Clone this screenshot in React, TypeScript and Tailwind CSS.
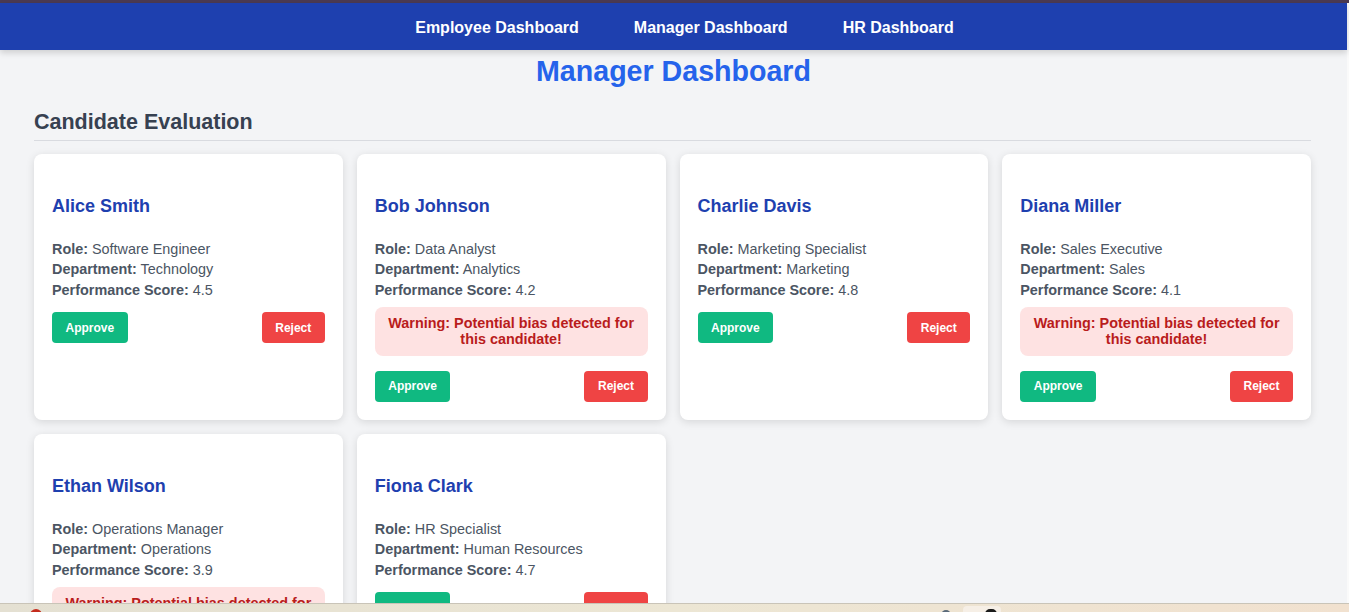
const candidates = [
  { name: 'Alice Smith', role: 'Software Engineer', department: 'Technology', score: '4.5', bias: false },
  { name: 'Bob Johnson', role: 'Data Analyst', department: 'Analytics', score: '4.2', bias: true },
  { name: 'Charlie Davis', role: 'Marketing Specialist', department: 'Marketing', score: '4.8', bias: false },
  { name: 'Diana Miller', role: 'Sales Executive', department: 'Sales', score: '4.1', bias: true },
  { name: 'Ethan Wilson', role: 'Operations Manager', department: 'Operations', score: '3.9', bias: true },
  { name: 'Fiona Clark', role: 'HR Specialist', department: 'Human Resources', score: '4.7', bias: false },
];

type Candidate = (typeof candidates)[number];

function CandidateCard({ c }: { c: Candidate }) {
  return (
    <div className="flex flex-col rounded-lg bg-white px-[18px] pt-[38px] pb-[18px] shadow-[0_2px_8px_rgba(0,0,0,0.12)]">
      <h3 className="text-[18px] leading-[28px] font-bold text-[#1e40af]">{c.name}</h3>
      <div className="mt-[18.7px] text-[14.4px] leading-[20.6px] text-[#4b5563]">
        <p>
          <strong>Role:</strong> {c.role}
        </p>
        <p>
          <strong>Department:</strong> {c.department}
        </p>
        <p>
          <strong>Performance Score:</strong> {c.score}
        </p>
      </div>
      {c.bias && (
        <div className="mt-[6.5px] mb-[3px] rounded-lg bg-[#fee2e2] px-[10px] py-[8px] text-center text-[14.4px] leading-[16.5px] font-bold text-[#b91c1c]">
          Warning: Potential bias detected for this candidate!
        </div>
      )}
      <div className="mt-[12px] flex items-center justify-between">
        <button className="h-[31px] rounded bg-[#10b981] px-[13.5px] text-[12px] font-bold text-white">Approve</button>
        <button className="h-[31px] rounded bg-[#ef4444] px-[13.5px] text-[12px] font-bold text-white">Reject</button>
      </div>
    </div>
  );
}

export default function App() {
  return (
    <div className="relative h-[612px] w-[1349px] overflow-hidden bg-[#fafafa] font-['Liberation_Sans',Arial,sans-serif]">
      <div className="h-[3px] bg-[#4b3a52]" />
      <div className="h-[609px] w-[1347px] bg-[#f3f4f6]">
        {/* Top nav */}
        <nav className="relative z-10 flex h-[47px] items-center justify-center gap-[55px] bg-[#1e40af] pt-[2px] pl-[22px] text-[16px] font-bold text-white shadow-[0_3px_6px_rgba(0,0,0,0.15)]">
          <a>Employee Dashboard</a>
          <a>Manager Dashboard</a>
          <a>HR Dashboard</a>
        </nav>

        <h1 className="mt-[3px] text-center text-[28.6px] leading-[36px] font-bold text-[#2563eb]">Manager Dashboard</h1>

        <section className="pl-[34px] pr-[36px]">
          <h2 className="mt-[18px] border-b border-[#d9dbe0] pb-[3px] text-[21.5px] leading-[30px] font-bold text-[#374151]">
            Candidate Evaluation
          </h2>
          <div className="mt-[13px] grid grid-cols-4 gap-[14px]">
            {candidates.map((c) => (
              <CandidateCard key={c.name} c={c} />
            ))}
          </div>
        </section>
      </div>

      {/* OS taskbar peeking in at the bottom */}
      <div className="absolute bottom-0 left-0 h-[9px] w-full border-t border-[#c9c4b8] bg-gradient-to-r from-[#e4e0d2] via-[#ece6d4] to-[#f1e1cf]">
        <div className="absolute top-[5px] left-[30px] h-[12px] w-[12px] rounded-full bg-[#c42b1c]" />
        <div className="absolute top-[6px] left-[941px] h-[10px] w-[10px] rounded-full bg-[#5a6a7a]" />
        <div className="absolute top-[2px] left-[963px] h-[10px] w-[38px] rounded-t bg-[#f6efe6]" />
        <div className="absolute top-[5px] left-[985px] h-[10px] w-[12px] rounded-full bg-[#1a1a1a]" />
      </div>
    </div>
  );
}
